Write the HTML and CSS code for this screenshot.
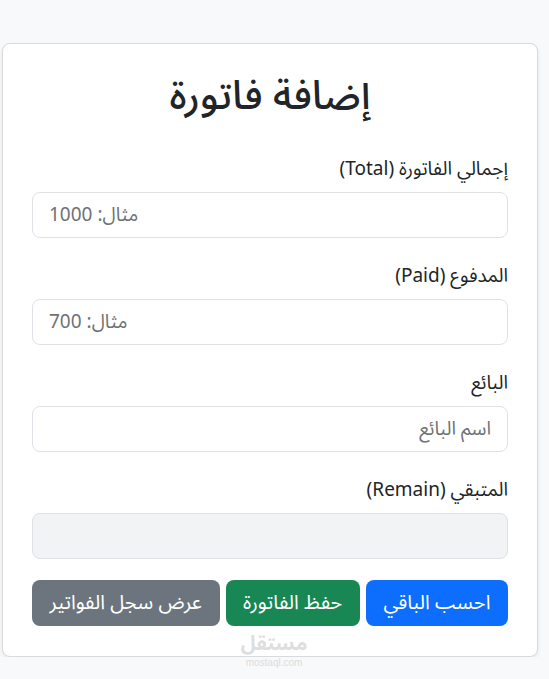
FILE: index.html
```html
<!DOCTYPE html>
<html lang="ar" dir="rtl">
<head>
<meta charset="utf-8">
<title>إضافة فاتورة</title>
<link rel="stylesheet" href="styles.css">
</head>
<body>
<div class="page">
  <div class="card">
    <h2 class="title">إضافة فاتورة</h2>
    <div class="group">
      <label class="label">إجمالي الفاتورة (Total)</label>
      <input class="control num" type="number" placeholder="مثال: 1000">
    </div>
    <div class="group">
      <label class="label">المدفوع (Paid)</label>
      <input class="control num" type="number" placeholder="مثال: 700">
    </div>
    <div class="group">
      <label class="label">البائع</label>
      <input class="control" type="text" placeholder="اسم البائع">
    </div>
    <div class="group last">
      <label class="label">المتبقي (Remain)</label>
      <input class="control readonly" type="text" readonly>
    </div>
    <div class="actions">
      <button class="btn blue">احسب الباقي</button>
      <button class="btn green">حفظ الفاتورة</button>
      <button class="btn gray">عرض سجل الفواتير</button>
    </div>
  </div>
</div>
<div class="watermark">
  <div class="wm-ar">مستقل</div>
  <div class="wm-en">mostaql.com</div>
</div>
</body>
</html>
```
FILE: styles.css
```css
* { box-sizing: border-box; }
html, body {
  margin: 0;
  background: #f8f9fa;
  font-family: "Noto Sans Arabic", "DejaVu Sans", "Noto Sans", sans-serif;
  color: #212529;
}
.page {
  padding: 43px 11px 0 2px;
}
.card {
  background: #fff;
  border: 1px solid #d9dadc;
  border-radius: 8px;
  padding: 29px 29px 30px;
  box-shadow: 0 2px 4px rgba(0,0,0,0.08);
}
.title {
  margin: 0 0 34px;
  font-size: 40px;
  line-height: 1.2;
  font-weight: 500;
  text-align: center;
}
.group {
  display: flex;
  flex-direction: column;
  margin-bottom: 24.5px;
}
.group.last { margin-bottom: 21px; }
.label {
  font-size: 19px;
  line-height: 1.5;
  margin-bottom: 8px;
}
.control {
  height: 46px;
  width: 100%;
  padding: 0 16px;
  font-family: inherit;
  font-size: 19px;
  color: #212529;
  background: #fff;
  border: 1px solid #dee2e6;
  border-radius: 8px;
  outline: none;
}
.control::placeholder { color: #6f7275; }
.control.num { text-align: left; }
.control.num::-webkit-inner-spin-button,
.control.num::-webkit-outer-spin-button { -webkit-appearance: none; margin: 0; }
.control.readonly { background: #f1f3f5; }
.actions {
  display: flex;
  gap: 6px;
}
.btn {
  flex: 1 1 auto;
  height: 46px;
  padding: 0 16px;
  font-family: inherit;
  font-size: 20px;
  color: #fff;
  border: none;
  border-radius: 8px;
}
.blue { background: #0d6efd; }
.green { background: #198754; }
.gray { background: #6c757d; }
.watermark {
  position: absolute;
  left: 238px;
  top: 635px;
  width: 72px;
  text-align: center;
  color: #d6d6d6;
  opacity: 0.8;
  pointer-events: none;
}
.wm-ar { font-size: 20px; font-weight: 700; line-height: 18px; }
.wm-en { font-family: "Liberation Sans", sans-serif; font-size: 10px; line-height: 11px; margin-top: 4px; direction: ltr; }
```
